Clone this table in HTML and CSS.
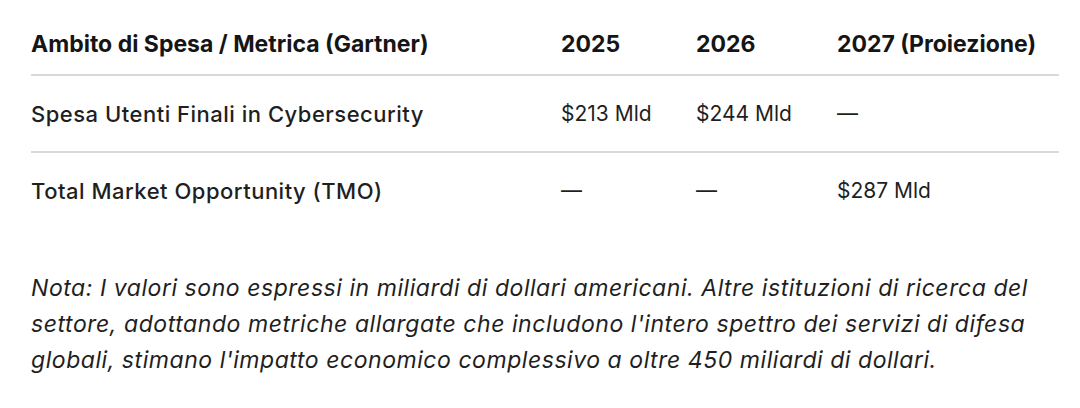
FILE: index.html
```html
<!DOCTYPE html>
<html lang="it">
<head>
<meta charset="utf-8">
<link rel="stylesheet" href="styles.css">
</head>
<body>
<main class="page">
  <div class="table">
    <div class="row head">
      <div class="cell">Ambito di Spesa / Metrica (Gartner)</div>
      <div class="cell">2025</div>
      <div class="cell">2026</div>
      <div class="cell">2027 (Proiezione)</div>
    </div>
    <div class="row">
      <div class="cell label">Spesa Utenti Finali in Cybersecurity</div>
      <div class="cell">$213 Mld</div>
      <div class="cell">$244 Mld</div>
      <div class="cell">—</div>
    </div>
    <div class="row last">
      <div class="cell label">Total Market Opportunity (TMO)</div>
      <div class="cell">—</div>
      <div class="cell">—</div>
      <div class="cell">$287 Mld</div>
    </div>
  </div>
  <p class="note">Nota: I valori sono espressi in miliardi di dollari americani. Altre istituzioni di ricerca del settore, adottando metriche allargate che includono l'intero spettro dei servizi di difesa globali, stimano l'impatto economico complessivo a oltre 450 miliardi di dollari.</p>
</main>
</body>
</html>
```

FILE: styles.css
```css
html, body {
  margin: 0;
  padding: 0;
  background: #ffffff;
}
body {
  font-family: "Inter", "Roboto", "Liberation Sans", sans-serif;
  color: #1f1f1f;
}
.page {
  padding: 10px 21px 0 31px;
}
.table {
  display: flex;
  flex-direction: column;
}
.row {
  display: grid;
  grid-template-columns: 530px 135px 141px 1fr;
  height: 75px;
  align-items: center;
  border-bottom: 2px solid #d9d9d9;
  font-size: 21px;
  font-weight: 400;
}
.row.head {
  height: 66px;
  padding-top: 4px;
  box-sizing: border-box;
  font-size: 23px;
  font-weight: 700;
  color: #151515;
}
.row.last {
  border-bottom: none;
}
.cell.label {
  font-size: 22px;
  font-weight: 500;
  letter-spacing: 0.5px;
}
.note {
  margin: 42px 0 0 0;
  width: 1045px;
  font-size: 23px;
  letter-spacing: 0.55px;
  line-height: 36px;
  font-style: italic;
  color: #1f1f1f;
}
```
